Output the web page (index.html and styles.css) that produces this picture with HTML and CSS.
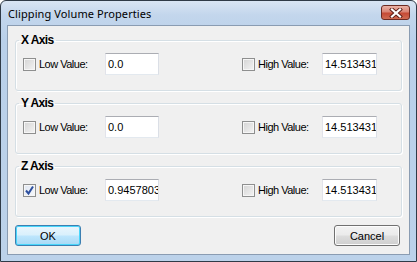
FILE: index.html
```html
<!DOCTYPE html>
<html lang="en">
	<head>
		<meta http-equiv="Content-Type" content="text/html; charset=utf-8" />
		<title>Clipping Volume Properties</title>
		<link rel="stylesheet" href="styles.css">
	</head>

	<body>
		<div class="win">
			<div class="titlebar">
				<span class="title">Clipping Volume Properties</span>
				<span class="close">
					<svg width="14" height="10" viewBox="0 0 14 10">
						<path d="M3 1.5 L11 8.5 M11 1.5 L3 8.5" stroke="#5a1c16" stroke-width="4" stroke-linecap="square"/>
						<path d="M3 1.5 L11 8.5 M11 1.5 L3 8.5" stroke="#fff" stroke-width="2.2" stroke-linecap="square"/>
					</svg>
				</span>
			</div>
			<div class="client">
				<fieldset class="grp">
					<legend>X Axis</legend>
					<div class="row">
						<span class="chk"></span>
						<span class="lbl">Low Value:</span>
						<span class="txt">0.0</span>
						<span></span>
						<span class="chk"></span>
						<span class="lbl">High Value:</span>
						<span class="txt">14.513431</span>
					</div>
				</fieldset>
				<fieldset class="grp">
					<legend>Y Axis</legend>
					<div class="row">
						<span class="chk"></span>
						<span class="lbl">Low Value:</span>
						<span class="txt">0.0</span>
						<span></span>
						<span class="chk"></span>
						<span class="lbl">High Value:</span>
						<span class="txt">14.513431</span>
					</div>
				</fieldset>
				<fieldset class="grp">
					<legend>Z Axis</legend>
					<div class="row">
						<span class="chk on">
							<svg width="11" height="11" viewBox="0 0 11 11">
								<path d="M2 5.5 L4.5 8.5 L9 1.5" fill="none" stroke="#2d4f9e" stroke-width="2"/>
							</svg>
						</span>
						<span class="lbl">Low Value:</span>
						<span class="txt">0.9457803</span>
						<span></span>
						<span class="chk"></span>
						<span class="lbl">High Value:</span>
						<span class="txt">14.513431</span>
					</div>
				</fieldset>
				<div class="btns">
					<span class="btn def">OK</span>
					<span class="btn">Cancel</span>
				</div>
			</div>
		</div>
	</body>
</html>
```

FILE: styles.css
```css
html,body{
	margin:0;
	padding:0;
	background:#fff;
}
.win{
	width:417px;
	height:262px;
	box-sizing:border-box;
	border:1px solid #2f3a47;
	border-radius:6px 6px 0 0;
	background:linear-gradient(#d9e5f3 0px, #c3d6ec 14px, #b9d0ea 40px, #bcd2ea 100%);
	padding:0 6px 6px 6px;
	display:flex;
	flex-direction:column;
	font-family:"Liberation Sans", Arial, sans-serif;
}
.titlebar{
	height:24px;
	display:flex;
	align-items:center;
	justify-content:space-between;
}
.title{
	font-family:"Noto Sans", "Liberation Sans", sans-serif;
	font-size:11px;
	letter-spacing:0.1px;
	color:#000;
	padding-left:1px;
	padding-top:1px;
}
.close{
	width:29px;
	height:15px;
	box-sizing:border-box;
	border:1px solid #6b2a22;
	border-radius:3px;
	background:linear-gradient(#eab2a6 0%, #d98373 45%, #c54a35 55%, #cf6b52 100%);
	display:flex;
	align-items:center;
	justify-content:center;
	margin-top:-1px;
}
.client{
	flex:1;
	background:#f0f0f0;
	border:1px solid #8a9cb2;
	padding:7px 7px 0 7px;
	display:flex;
	flex-direction:column;
}
.grp{
	margin:0 0 5px 0;
	padding:6px 0 15px 7px;
	border:1px solid #d5dfe5;
	border-radius:3px;
	box-shadow:inset 1px 1px 0 #fff, 1px 1px 0 #fff;
	min-width:0;
}
.grp legend{
	font-weight:bold;
	font-size:12px;
	letter-spacing:-0.6px;
	line-height:14px;
	padding:0 2px;
	margin-left:-4px;
	color:#000;
}
.row{
	display:grid;
	grid-template-columns:14px 68px 54px 83px 14px 66px 55px;
	align-items:center;
	height:22px;
	font-size:11px;
}
.chk{
	width:13px;
	height:13px;
	box-sizing:border-box;
	border:1px solid #8e8f8f;
	background:linear-gradient(135deg, #d4d4d4, #f4f4f4);
	box-shadow:inset 0 0 0 1px #f6f6f6;
	display:flex;
	align-items:center;
	justify-content:center;
}
.chk.on{
	background:linear-gradient(135deg, #dfe6f1, #f7f9fc);
}
.lbl{
	padding-left:2px;
	letter-spacing:-0.5px;
	color:#000;
}
.txt{
	height:22px;
	box-sizing:border-box;
	border:1px solid #abadb3;
	border-left-color:#e2e3ea;
	border-right-color:#dbdfe6;
	border-bottom-color:#e3e9ef;
	background:#fff;
	font-size:11px;
	line-height:18px;
	padding:1px 0 0 2px;
	white-space:nowrap;
	overflow:hidden;
}
.btns{
	display:flex;
	justify-content:space-between;
	margin-top:3px;
	padding-right:2px;
}
.btn{
	width:66px;
	height:21px;
	box-sizing:border-box;
	border:1px solid #707070;
	border-radius:3px;
	background:linear-gradient(#f2f2f2 0%, #ebebeb 48%, #dddddd 52%, #cfcfcf 100%);
	box-shadow:inset 0 0 0 1px #fcfcfc;
	font-size:11px;
	display:flex;
	align-items:center;
	justify-content:center;
	color:#000;
}
.btn.def{
	border-color:#3c7fb1;
	background:linear-gradient(#eaf6fd 0%, #d9f0fc 48%, #bee6fd 52%, #a7d9f5 100%);
	box-shadow:inset 0 0 0 1px #48d6fb;
}
```
